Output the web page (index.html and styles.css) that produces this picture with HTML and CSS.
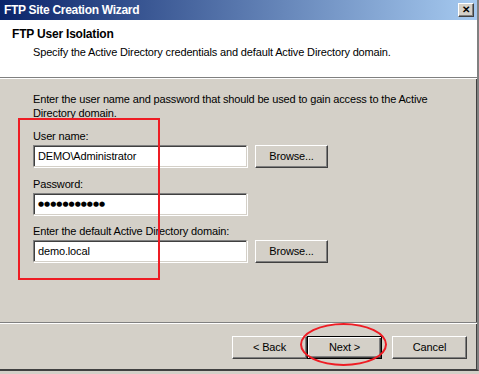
FILE: index.html
```html
<!DOCTYPE html>
<html lang="en">
<head>
    <meta charset="UTF-8">
    <title>FTP Site Creation Wizard</title>
    <link rel="stylesheet" href="styles.css">
</head>
<body>
    <div class="window">
        <div class="titlebar">
            <span class="title">FTP Site Creation Wizard</span>
            <div class="close-btn">&#x2715;</div>
        </div>
        <div class="header">
            <h1>FTP User Isolation</h1>
            <p>Specify the Active Directory credentials and default Active Directory domain.</p>
        </div>
        <div class="content">
            <p class="intro">Enter the user name and password that should be used to gain access to the Active Directory domain.</p>

            <label class="label">User name:</label>
            <div class="row">
                <div class="field">DEMO\Administrator</div>
                <div class="btn">Browse...</div>
            </div>

            <label class="label">Password:</label>
            <div class="row">
                <div class="field password">●●●●●●●●●●●</div>
            </div>

            <label class="label">Enter the default Active Directory domain:</label>
            <div class="row">
                <div class="field">demo.local</div>
                <div class="btn">Browse...</div>
            </div>
        </div>
        <div class="footer">
            <div class="btn wide">&lt; Back</div>
            <div class="btn wide default">Next &gt;</div>
            <div class="btn wide cancel">Cancel</div>
        </div>

        <!-- annotations drawn over the screenshot -->
        <div class="mark-box"></div>
        <div class="mark-ring"></div>
    </div>
</body>
</html>
```

FILE: styles.css
```css
* {
    margin: 0;
    padding: 0;
    box-sizing: border-box;
}
body {
    width: 479px;
    height: 374px;
    overflow: hidden;
    background: #d4d0c8;
    font-family: 'Liberation Sans', Arial, sans-serif;
    font-size: 11px;
    letter-spacing: -0.15px;
    color: #000;
}
.window {
    position: relative;
    width: 479px;
    height: 371px;
    background: #d4d0c8;
    border-right: 2px solid #808080;
    border-bottom: 2px solid #404040;
    box-shadow: inset -1px 0 0 #404040;
}
.titlebar {
    display: flex;
    align-items: center;
    justify-content: space-between;
    height: 20px;
    padding: 0 3px 0 4px;
    background: linear-gradient(90deg, #0a246a, #a6caf0);
}
.title {
    color: #fff;
    font-weight: bold;
    font-size: 12px;
    letter-spacing: -0.3px;
}
.close-btn {
    width: 16px;
    height: 14px;
    background: #d4d0c8;
    border: 1px solid;
    border-color: #fff #404040 #404040 #fff;
    box-shadow: inset -1px -1px 0 #808080;
    font-size: 10px;
    font-weight: bold;
    line-height: 11px;
    text-align: center;
    letter-spacing: 0;
}
.header {
    height: 58px;
    background: #fff;
    padding: 7px 0 0 12px;
    border-bottom: 1px solid #808080;
    box-shadow: 0 1px 0 #fff;
}
.header h1 {
    font-size: 12px;
    font-weight: bold;
    line-height: 15px;
    letter-spacing: -0.2px;
}
.header p {
    margin-top: 3px;
    padding-left: 21px;
    line-height: 14px;
}
.content {
    height: 245px;
    padding: 14px 0 0 33px;
    border-bottom: 1px solid #808080;
}
.intro {
    width: 430px;
    line-height: 14px;
}
.label {
    display: block;
    margin-top: 9px;
    line-height: 14px;
}
.row {
    display: flex;
    gap: 8px;
    margin-top: 2px;
    margin-bottom: 1px;
}
.field {
    width: 214px;
    height: 22px;
    padding: 3px 0 0 4px;
    background: #fff;
    border: 1px solid;
    border-color: #808080 #d4d0c8 #d4d0c8 #808080;
    box-shadow: inset 1px 1px 0 #404040, 1px 1px 0 #fff;
    line-height: 14px;
    white-space: nowrap;
}
.password {
    font-family: 'DejaVu Sans', sans-serif;
    font-size: 7px;
    letter-spacing: 0;
    line-height: 15px;
}
.btn {
    width: 73px;
    height: 23px;
    background: #d4d0c8;
    border: 1px solid;
    border-color: #fff #404040 #404040 #fff;
    box-shadow: inset -1px -1px 0 #808080;
    text-align: center;
    line-height: 20px;
}
.footer {
    display: flex;
    justify-content: flex-end;
    padding: 12px 10px 0 0;
    border-top: 1px solid #fff;
}
.btn.wide {
    width: 75px;
}
.btn.default {
    border: 1px solid #000;
    box-shadow: inset 1px 1px 0 #fff, inset -1px -1px 0 #404040, inset -2px -2px 0 #808080;
}
.btn.cancel {
    margin-left: 10px;
}
.mark-box {
    position: absolute;
    left: 18px;
    top: 118px;
    width: 142px;
    height: 162px;
    border: 2px solid #ee1c24;
}
.mark-ring {
    position: absolute;
    left: 300px;
    top: 323px;
    width: 87px;
    height: 43px;
    border: 2px solid #ee1c24;
    border-radius: 50%;
}
```
